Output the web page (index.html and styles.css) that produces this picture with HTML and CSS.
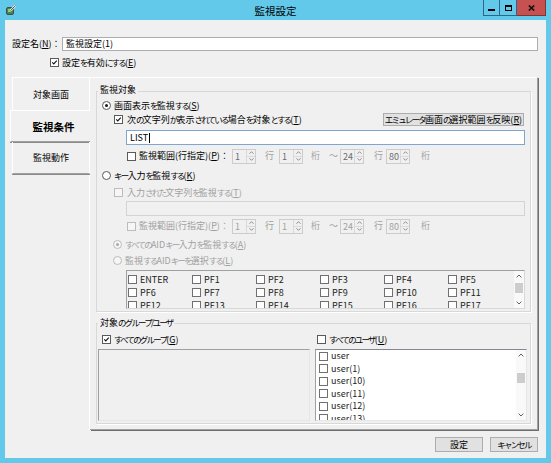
FILE: index.html
```html
<!DOCTYPE html>
<html lang="ja">
<head>
<meta charset="utf-8">
<title>監視設定</title>
<link rel="stylesheet" href="styles.css">
</head>
<body>
<div class="window">
  <div class="titlebar">
    <div class="app-icon">
      <svg width="11" height="11" viewBox="0 0 11 11"><rect x="0.5" y="3.5" width="7" height="7" rx="1.5" fill="#3f8a4a" stroke="#4a4a4a"/><rect x="2" y="5" width="3" height="3" fill="#7fd08a"/><path d="M4.5 6.5 L9.5 1.5" stroke="#e8e8e8" stroke-width="2.2"/><path d="M4.5 6.5 L9.5 1.5" stroke="#606060" stroke-width="1"/></svg>
    </div>
    <div class="title">監視設定</div>
    <div class="win-buttons">
      <div class="wb min"><span class="g-min"></span></div>
      <div class="wb max"><span class="g-max"></span></div>
      <div class="wb close"><svg width="7" height="6" viewBox="0 0 7 6"><path d="M0.8 0.5 L6.2 5.5 M6.2 0.5 L0.8 5.5" stroke="#111" stroke-width="1.6"/></svg></div>
    </div>
  </div>

  <div class="client">
    <div class="name-row">
      <div class="name-label">設定名(<u>N</u>)：</div>
      <div class="textbox name-input">監視設定(1)</div>
    </div>
    <div class="enable-row">
      <span class="cb"><svg viewBox="0 0 9 9"><path d="M1.6 4.4 L3.6 6.4 L7.4 2" stroke="#111" stroke-width="1.4" fill="none"/></svg></span>
      <span>設定<span class="k">を</span>有効<span class="k">にする</span>(<u>E</u>)</span>
    </div>

    <div class="tabs">
      <div class="tab-list">
        <div class="tab">対象画面</div>
        <div class="tab selected">監視条件</div>
        <div class="tab lined">監視動作</div>
        <div class="tab-filler"></div>
      </div>

      <div class="tab-panel">
        <div class="group g1">
          <div class="group-title">監視対象</div>

          <div class="row r-screen">
            <span class="rb on"></span><span>画面表示<span class="k">を</span>監視<span class="k">する</span>(<u>S</u>)</span>
          </div>
          <div class="row r-string">
            <span class="cb"><svg viewBox="0 0 9 9"><path d="M1.6 4.4 L3.6 6.4 L7.4 2" stroke="#111" stroke-width="1.4" fill="none"/></svg></span>
            <span>次<span class="k">の</span>文字列<span class="k">が</span>表示<span class="k">されている</span>場合<span class="k">を</span>対象<span class="k">とする</span>(<u>T</u>)</span>
            <button class="btn btn-emu"><span class="k">エミュレータ</span>画面<span class="k">の</span>選択範囲<span class="k">を</span>反映(<u>R</u>)</button>
          </div>
          <div class="textbox tb-list"><span>LIST</span><span class="caret"></span></div>

          <div class="row r-range">
            <div class="range-label"><span class="cb"></span><span>監視範囲(行指定)(<u>P</u>)：</span></div>
            <div class="spin"><span class="v">1</span><span class="btns"><span><svg width="5" height="3" viewBox="0 0 5 3"><path d="M0.5 2.7 L2.5 0.7 L4.5 2.7" stroke="#8c8c8c" fill="none"/></svg></span><span><svg width="5" height="3" viewBox="0 0 5 3"><path d="M0.5 0.3 L2.5 2.3 L4.5 0.3" stroke="#8c8c8c" fill="none"/></svg></span></span></div>
            <span class="unit u1">行</span>
            <div class="spin"><span class="v">1</span><span class="btns"><span><svg width="5" height="3" viewBox="0 0 5 3"><path d="M0.5 2.7 L2.5 0.7 L4.5 2.7" stroke="#8c8c8c" fill="none"/></svg></span><span><svg width="5" height="3" viewBox="0 0 5 3"><path d="M0.5 0.3 L2.5 2.3 L4.5 0.3" stroke="#8c8c8c" fill="none"/></svg></span></span></div>
            <span class="unit u2">桁</span><span class="unit u3">～</span>
            <div class="spin"><span class="v">24</span><span class="btns"><span><svg width="5" height="3" viewBox="0 0 5 3"><path d="M0.5 2.7 L2.5 0.7 L4.5 2.7" stroke="#8c8c8c" fill="none"/></svg></span><span><svg width="5" height="3" viewBox="0 0 5 3"><path d="M0.5 0.3 L2.5 2.3 L4.5 0.3" stroke="#8c8c8c" fill="none"/></svg></span></span></div>
            <span class="unit u4">行</span>
            <div class="spin"><span class="v">80</span><span class="btns"><span><svg width="5" height="3" viewBox="0 0 5 3"><path d="M0.5 2.7 L2.5 0.7 L4.5 2.7" stroke="#8c8c8c" fill="none"/></svg></span><span><svg width="5" height="3" viewBox="0 0 5 3"><path d="M0.5 0.3 L2.5 2.3 L4.5 0.3" stroke="#8c8c8c" fill="none"/></svg></span></span></div>
            <span class="unit u5">桁</span>
          </div>

          <div class="row r-key">
            <span class="rb"></span><span><span class="k">キー</span>入力<span class="k">を</span>監視<span class="k">する</span>(<u>K</u>)</span>
          </div>
          <div class="row r-input-str dis">
            <span class="cb off"></span><span>入力<span class="k">された</span>文字列<span class="k">を</span>監視<span class="k">する</span>(<u>T</u>)</span>
          </div>
          <div class="textbox tb-dis"></div>

          <div class="row r-range2 dis">
            <div class="range-label"><span class="cb off"></span><span>監視範囲(行指定)(<u>P</u>)：</span></div>
            <div class="spin"><span class="v">1</span><span class="btns"><span><svg width="5" height="3" viewBox="0 0 5 3"><path d="M0.5 2.7 L2.5 0.7 L4.5 2.7" stroke="#8c8c8c" fill="none"/></svg></span><span><svg width="5" height="3" viewBox="0 0 5 3"><path d="M0.5 0.3 L2.5 2.3 L4.5 0.3" stroke="#8c8c8c" fill="none"/></svg></span></span></div>
            <span class="unit u1">行</span>
            <div class="spin"><span class="v">1</span><span class="btns"><span><svg width="5" height="3" viewBox="0 0 5 3"><path d="M0.5 2.7 L2.5 0.7 L4.5 2.7" stroke="#8c8c8c" fill="none"/></svg></span><span><svg width="5" height="3" viewBox="0 0 5 3"><path d="M0.5 0.3 L2.5 2.3 L4.5 0.3" stroke="#8c8c8c" fill="none"/></svg></span></span></div>
            <span class="unit u2">桁</span><span class="unit u3">～</span>
            <div class="spin"><span class="v">24</span><span class="btns"><span><svg width="5" height="3" viewBox="0 0 5 3"><path d="M0.5 2.7 L2.5 0.7 L4.5 2.7" stroke="#8c8c8c" fill="none"/></svg></span><span><svg width="5" height="3" viewBox="0 0 5 3"><path d="M0.5 0.3 L2.5 2.3 L4.5 0.3" stroke="#8c8c8c" fill="none"/></svg></span></span></div>
            <span class="unit u4">行</span>
            <div class="spin"><span class="v">80</span><span class="btns"><span><svg width="5" height="3" viewBox="0 0 5 3"><path d="M0.5 2.7 L2.5 0.7 L4.5 2.7" stroke="#8c8c8c" fill="none"/></svg></span><span><svg width="5" height="3" viewBox="0 0 5 3"><path d="M0.5 0.3 L2.5 2.3 L4.5 0.3" stroke="#8c8c8c" fill="none"/></svg></span></span></div>
            <span class="unit u5">桁</span>
          </div>

          <div class="row r-aid-all dis">
            <span class="rb off on"></span><span><span class="k">すべての</span>AID<span class="k">キー</span>入力<span class="k">を</span>監視<span class="k">する</span>(<u>A</u>)</span>
          </div>
          <div class="row r-aid-sel dis">
            <span class="rb off"></span><span>監視<span class="k">する</span>AID<span class="k">キーを</span>選択<span class="k">する</span>(<u>L</u>)</span>
          </div>

          <div class="aid-list">
            <div class="aid-grid">
              <div class="aid-item"><span class="cb"></span>ENTER</div>
              <div class="aid-item"><span class="cb"></span>PF1</div>
              <div class="aid-item"><span class="cb"></span>PF2</div>
              <div class="aid-item"><span class="cb"></span>PF3</div>
              <div class="aid-item"><span class="cb"></span>PF4</div>
              <div class="aid-item"><span class="cb"></span>PF5</div>
              <div class="aid-item"><span class="cb"></span>PF6</div>
              <div class="aid-item"><span class="cb"></span>PF7</div>
              <div class="aid-item"><span class="cb"></span>PF8</div>
              <div class="aid-item"><span class="cb"></span>PF9</div>
              <div class="aid-item"><span class="cb"></span>PF10</div>
              <div class="aid-item"><span class="cb"></span>PF11</div>
              <div class="aid-item"><span class="cb"></span>PF12</div>
              <div class="aid-item"><span class="cb"></span>PF13</div>
              <div class="aid-item"><span class="cb"></span>PF14</div>
              <div class="aid-item"><span class="cb"></span>PF15</div>
              <div class="aid-item"><span class="cb"></span>PF16</div>
              <div class="aid-item"><span class="cb"></span>PF17</div>
            </div>
            <div class="vscroll aid-scroll">
              <span class="sb-btn"><svg width="6" height="4" viewBox="0 0 6 4"><path d="M0.6 3.4 L3 1 L5.4 3.4" stroke="#606060" fill="none"/></svg></span>
              <span class="sb-track"><span class="sb-thumb"></span></span>
              <span class="sb-btn"><svg width="6" height="4" viewBox="0 0 6 4"><path d="M0.6 0.6 L3 3 L5.4 0.6" stroke="#606060" fill="none"/></svg></span>
            </div>
          </div>
        </div>

        <div class="group g2">
          <div class="group-title">対象<span class="k">のグループ/ユーザ</span></div>
          <div class="g2-checks">
            <div class="g2-check left">
              <span class="cb"><svg viewBox="0 0 9 9"><path d="M1.6 4.4 L3.6 6.4 L7.4 2" stroke="#111" stroke-width="1.4" fill="none"/></svg></span>
              <span><span class="k">すべてのグループ</span>(<u>G</u>)</span>
            </div>
            <div class="g2-check right">
              <span class="cb"></span>
              <span><span class="k">すべてのユーザ</span>(<u>U</u>)</span>
            </div>
          </div>
          <div class="g2-lists">
            <div class="group-list"></div>
            <div class="user-list">
              <div class="user-items">
                <div class="user-item"><span class="cb"></span>user</div>
                <div class="user-item"><span class="cb"></span>user(1)</div>
                <div class="user-item"><span class="cb"></span>user(10)</div>
                <div class="user-item"><span class="cb"></span>user(11)</div>
                <div class="user-item"><span class="cb"></span>user(12)</div>
                <div class="user-item"><span class="cb"></span>user(13)</div>
              </div>
              <div class="vscroll user-scroll">
                <span class="sb-btn"><svg width="6" height="4" viewBox="0 0 6 4"><path d="M0.6 3.4 L3 1 L5.4 3.4" stroke="#606060" fill="none"/></svg></span>
                <span class="sb-track"><span class="sb-thumb"></span></span>
                <span class="sb-btn"><svg width="6" height="4" viewBox="0 0 6 4"><path d="M0.6 0.6 L3 3 L5.4 0.6" stroke="#606060" fill="none"/></svg></span>
              </div>
            </div>
          </div>
        </div>
      </div>
    </div>

    <div class="footer">
      <button class="btn btn-foot">設定</button>
      <button class="btn btn-foot"><span class="k">キャンセル</span></button>
    </div>
  </div>
</div>
</body>
</html>
```

FILE: styles.css
```css
* { box-sizing: border-box; }
html, body { margin: 0; padding: 0; }
body {
  width: 551px;
  height: 463px;
  overflow: hidden;
  background: #62c9eb;
  font-family: "Noto Sans CJK JP", "Noto Sans", sans-serif;
  font-size: 9px;
  color: #000;
}
u { text-decoration-thickness: 1px; text-underline-offset: 1px; }

/* kana runs: narrow like the Meiryo UI kana of the original */
.k { font-size: 8.5px; letter-spacing: -1.8px; }

.window { width: 551px; height: 463px; display: flex; flex-direction: column; }

/* title bar */
.titlebar {
  height: 20px;
  display: grid;
  grid-template-columns: 1fr auto 1fr;
  align-items: start;
}
.app-icon { padding: 4px 0 0 6px; }
.app-icon svg { display: block; }
.title { font-size: 10.5px; line-height: 14px; padding-top: 4px; }
.win-buttons { justify-self: end; display: flex; margin-right: 5px; }
.wb {
  height: 16px;
  border: 1px solid #2e6687;
  border-top: none;
  display: flex;
  align-items: center;
  justify-content: center;
}
.wb + .wb { border-left: none; }
.wb.min, .wb.max { width: 17px; }
.wb.close { width: 29px; background: #c75050; border-color: #7d3434; }
.g-min { width: 7px; height: 2px; background: #000; margin-top: 4px; }
.g-max { width: 7px; height: 6px; border: 1px solid #000; border-top-width: 2px; }

/* client area */
.client {
  margin: 0 5px;
  height: 438px;
  background: #f0f0f0;
  padding: 17px 8px 0 5px;
  display: flex;
  flex-direction: column;
}
.textbox { background: #fff; border: 1px solid #abadb3; }
.name-row { display: flex; align-items: center; height: 14px; }
.name-label { width: 52px; padding-left: 2px; line-height: 14px; white-space: nowrap; }
.name-input { flex: 1; height: 14px; padding-left: 3px; line-height: 12px; }

.enable-row {
  margin-top: 6px;
  height: 10px;
  display: flex;
  align-items: center;
  gap: 3px;
  padding-left: 40px;
  line-height: 10px;
}

/* checkbox & radio */
.cb {
  width: 9px;
  height: 9px;
  flex: none;
  border: 1px solid #5a5a5a;
  background: #fff;
  display: inline-flex;
}
.cb svg { width: 7px; height: 7px; display: block; }
.cb.off { border-color: #bcbcbc; background: #f6f6f6; }
.rb {
  width: 9px;
  height: 9px;
  flex: none;
  border: 1px solid #5a5a5a;
  border-radius: 50%;
  background: #fff;
  display: inline-flex;
  align-items: center;
  justify-content: center;
}
.rb.on::after { content: ""; width: 3px; height: 3px; border-radius: 50%; background: #1a1a1a; }
.rb.off { border-color: #bcbcbc; background: #f6f6f6; }
.rb.off.on::after { background: #a8a8a8; }

/* tabs */
.tabs { margin-top: 10px; height: 353px; display: flex; }
.tab-list { width: 80px; display: flex; flex-direction: column; }
.tab {
  height: 33px;
  margin-left: 2px;
  display: flex;
  align-items: center;
  justify-content: center;
  border-top: 1px solid #fff;
  border-left: 1px solid #fff;
  border-right: 1px solid #fff;
}
.tab.selected {
  height: 32px;
  margin-left: 0;
  padding-left: 6px;
  border-right: none;
  font-weight: bold;
  font-size: 10.5px;
  border-bottom: 1px solid #a0a0a0;
  box-shadow: 0 1px 0 #8a8a8a;
}
.tab.lined {
  height: 32px;
  border-top: none;
  border-bottom: 1px solid #a0a0a0;
  box-shadow: 0 1px 0 #8a8a8a;
}
.tab-filler { flex: 1; border-right: 1px solid #fff; margin-top: 1px; }

.tab-panel {
  flex: 1;
  border-top: 1px solid #fff;
  border-right: 1px solid #a0a0a0;
  border-bottom: 1px solid #a0a0a0;
  box-shadow: 1px 1px 0 #6e6e6e;
  padding: 13px 6px 0 6px;
  display: flex;
  flex-direction: column;
}

/* group boxes */
.group {
  border: 1px solid #d8d8d8;
  box-shadow: 1px 1px 0 #fff;
  display: flex;
  flex-direction: column;
  padding-bottom: 2px;
}
.group-title {
  align-self: flex-start;
  margin: -8px 0 0 1px;
  padding: 0 2px;
  background: #f0f0f0;
  line-height: 12px;
  white-space: nowrap;
}
.g2 { margin-top: 11px; }

.row { height: 14px; display: flex; align-items: center; gap: 3px; line-height: 14px; white-space: nowrap; }
.dis { color: #a0a0a0; }
.r-screen { margin-top: 2px; padding-left: 5px; }
.r-string { padding-left: 17px; padding-right: 6px; gap: 4px; }
.r-range { margin-top: 4px; padding-left: 30px; gap: 0; }
.r-key { margin-top: 5px; padding-left: 5px; }
.r-input-str { margin-top: 3px; padding-left: 17px; gap: 4px; }
.r-range2 { margin-top: 3px; padding-left: 30px; gap: 0; }
.r-aid-all { margin-top: 4px; padding-left: 16px; }
.r-aid-sel { margin-top: 2px; padding-left: 16px; }

.btn {
  font-family: inherit;
  font-size: 9px;
  color: #000;
  background: #e1e1e1;
  border: 1px solid #adadad;
  padding: 0;
  line-height: 11px;
  white-space: nowrap;
}
.btn-emu { margin-left: auto; width: 141px; height: 13px; }

.tb-list {
  margin: 4px 5px 0 29px;
  height: 15px;
  border-color: #7fa6cf;
  padding-left: 3px;
  line-height: 13px;
  display: flex;
  align-items: center;
}
.caret { width: 1px; height: 10px; background: #000; margin-left: 1px; }
.tb-dis { margin: 2px 5px 0 29px; height: 15px; background: transparent; border-color: #d4d4d4; }

.range-label { width: 105px; display: flex; align-items: center; gap: 3px; }
.spin { width: 24px; height: 15px; border: 1px solid #cccccc; display: flex; flex: none; }
.spin .v { flex: 1; padding-left: 2px; line-height: 13px; color: #6d6d6d; }
.spin .btns { width: 9px; display: flex; flex-direction: column; border-left: 1px solid #d9d9d9; }
.spin .btns > span { flex: 1; display: flex; align-items: center; justify-content: center; }
.spin .btns > span + span { border-top: 1px solid #d9d9d9; }
.spin .btns svg { display: block; }
.r-range2 .spin .v { color: #a0a0a0; }
.unit { flex: none; color: #a0a0a0; }
.u1 { width: 23px; padding-left: 9px; }
.u2 { width: 18px; padding-left: 8px; }
.u3 { width: 19px; padding-left: 8px; }
.u4 { width: 22px; padding-left: 10px; }
.u5 { padding-left: 11px; }

/* AID list */
.aid-list {
  margin: 3px 5px 0 29px;
  height: 39px;
  border: 1px solid #a0a0a0;
  border-right-color: #d8d8d8;
  border-bottom-color: #d8d8d8;
  display: flex;
}
.aid-grid {
  flex: 1;
  overflow: hidden;
  padding: 2px 0 0 1px;
  display: grid;
  grid-template-columns: repeat(6, 64px);
  grid-auto-rows: 13px;
  color: #222;
}
.aid-item { display: flex; align-items: center; gap: 3px; line-height: 13px; }
.aid-item .cb { border-color: #707070; }

.vscroll { width: 10px; display: flex; flex-direction: column; background: #f9f9f9; flex: none; }
.sb-btn { height: 10px; display: flex; align-items: center; justify-content: center; flex: none; }
.sb-btn svg { display: block; }
.sb-track { flex: 1; display: flex; flex-direction: column; }
.sb-thumb { height: 10px; background: #cdcdcd; margin: 0 1px; }
.aid-scroll .sb-thumb { margin-top: 2px; }
.user-scroll .sb-thumb { margin-top: 13px; }

/* group 2 */
.g2-checks {
  margin-top: 3px;
  height: 14px;
  display: grid;
  grid-template-columns: 1fr 1fr;
  column-gap: 5px;
  padding: 0 3px 0 1px;
}
.g2-check { display: flex; align-items: center; gap: 3px; line-height: 14px; white-space: nowrap; }
.g2-check.left { padding-left: 4px; }
.g2-check.right { padding-left: 2px; }
.g2-lists {
  margin-top: 3px;
  height: 72px;
  display: grid;
  grid-template-columns: 1fr 1fr;
  column-gap: 5px;
  padding: 0 3px 0 1px;
}
.group-list {
  background: #f0f0f0;
  border-top: 1px solid #a0a0a0;
  border-left: 1px solid #a0a0a0;
  border-right: 1px solid #e6e6e6;
  border-bottom: 1px solid #e6e6e6;
}
.user-list {
  background: #fff;
  border-top: 1px solid #828790;
  border-left: 1px solid #a0a0a0;
  border-right: 1px solid #e6e6e6;
  border-bottom: 1px solid #e6e6e6;
  display: flex;
  overflow: hidden;
}
.user-items { flex: 1; overflow: hidden; color: #222; }
.user-item { height: 12.5px; display: flex; align-items: center; gap: 3px; padding-left: 3px; line-height: 12px; }
.user-item .cb { border-color: #707070; }

/* footer */
.footer { margin-top: 7px; display: flex; justify-content: flex-end; gap: 7px; }
.btn-foot { width: 48px; height: 15px; line-height: 13px; }
```
